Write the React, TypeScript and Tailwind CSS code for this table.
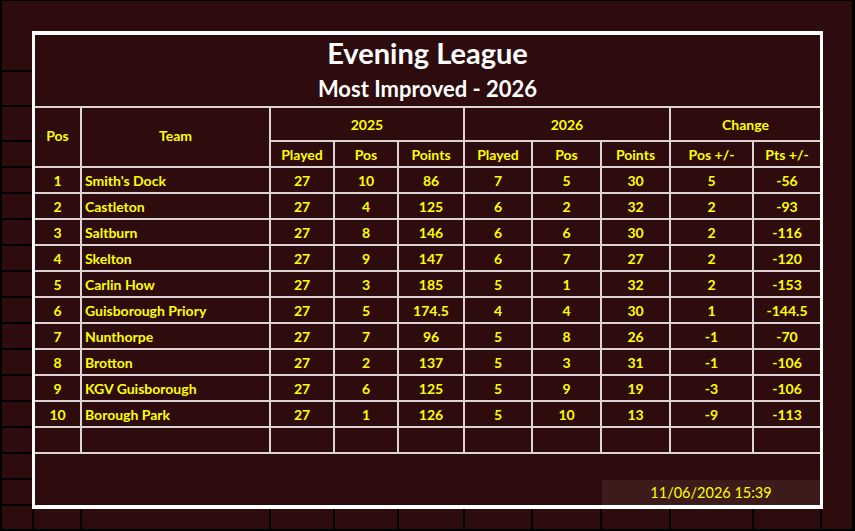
const rows = [
  [1, "Smith's Dock", 27, 10, 86, 7, 5, 30, 5, -56],
  [2, "Castleton", 27, 4, 125, 6, 2, 32, 2, -93],
  [3, "Saltburn", 27, 8, 146, 6, 6, 30, 2, -116],
  [4, "Skelton", 27, 9, 147, 6, 7, 27, 2, -120],
  [5, "Carlin How", 27, 3, 185, 5, 1, 32, 2, -153],
  [6, "Guisborough Priory", 27, 5, 174.5, 4, 4, 30, 1, -144.5],
  [7, "Nunthorpe", 27, 7, 96, 5, 8, 26, -1, -70],
  [8, "Brotton", 27, 2, 137, 5, 3, 31, -1, -106],
  [9, "KGV Guisborough", 27, 6, 125, 5, 9, 19, -3, -106],
  [10, "Borough Park", 27, 1, 126, 5, 10, 13, -9, -113],
];

const cols = "grid-cols-[45px_187px_62px_62px_64px_66px_67px_67px_81px_66px]";
const cell = "flex items-center justify-center bg-[#2e0c0d]";

export default function App() {
  return (
    <div className="h-[531px] w-[855px] border-l-2 border-t border-r-[3px] border-b-2 border-black bg-[#2e0c0d] font-['Lato','Liberation_Sans',sans-serif] text-[14px] font-bold text-[#ffff00] flex flex-col">
      <div className="flex h-[508px]">
        {/* sheet column A gridlines */}
        <div className="flex w-[30px] flex-col">
          <div className="h-[71px] border-b-2 border-black" />
          <div className="h-[35px] border-b-2 border-black" />
          <div className="h-[35px] border-b-2 border-black" />
          {Array.from({ length: 14 }).map((_, i) => (
            <div key={i} className="h-[26px] border-b-2 border-black" />
          ))}
        </div>

        <div className="mt-[30px] flex w-[791px] flex-col border-x-[3px] border-t-4 border-b-4 border-white">
          <div className="flex h-[37px] items-end justify-center pb-[5px] text-[29px] leading-none text-white">
            Evening League
          </div>
          <div className="flex h-[34px] items-center justify-center text-[22px] leading-none text-white">
            Most Improved - 2026
          </div>

          <div className={`grid ${cols} grid-rows-[32px_24px] gap-[2px] bg-[#ddd5d5] pt-[2px]`}>
            <div className={`${cell} row-span-2 pb-[3px]`}>Pos</div>
            <div className={`${cell} row-span-2 pb-[3px]`}>Team</div>
            <div className={`${cell} col-span-3`}>2025</div>
            <div className={`${cell} col-span-3`}>2026</div>
            <div className={`${cell} col-span-2`}>Change</div>
            {["Played", "Pos", "Points", "Played", "Pos", "Points", "Pos +/-", "Pts +/-"].map((h, i) => (
              <div key={i} className={cell}>{h}</div>
            ))}
          </div>

          <div className={`grid ${cols} auto-rows-[24px] gap-[2px] bg-[#ddd5d5] py-[2px]`}>
            {rows.map((r) =>
              r.map((v, j) => (
                <div
                  key={`${r[0]}-${j}`}
                  className={j === 1 ? "flex items-center bg-[#2e0c0d] pl-[3px]" : cell}
                >
                  {v}
                </div>
              ))
            )}
            {Array.from({ length: 10 }).map((_, j) => (
              <div key={`e${j}`} className="bg-[#2e0c0d]" />
            ))}
          </div>

          <div className="h-[26px]" />
          <div className={`grid ${cols} h-[25px] gap-x-[2px]`}>
            <div className="col-start-8 col-span-3 flex items-center justify-center bg-[#3e1b1b] text-[14.5px] font-normal">
              11/06/2026 15:39
            </div>
          </div>
        </div>

        <div className="flex-1" />
      </div>

      {/* sheet row below the box */}
      <div className="grid h-[20px] grid-cols-[30px_46px_187px_62px_62px_64px_66px_67px_67px_81px_66px_1fr] gap-x-[2px] bg-black">
        {Array.from({ length: 12 }).map((_, i) => (
          <div key={i} className="bg-[#2e0c0d]" />
        ))}
      </div>
    </div>
  );
}
